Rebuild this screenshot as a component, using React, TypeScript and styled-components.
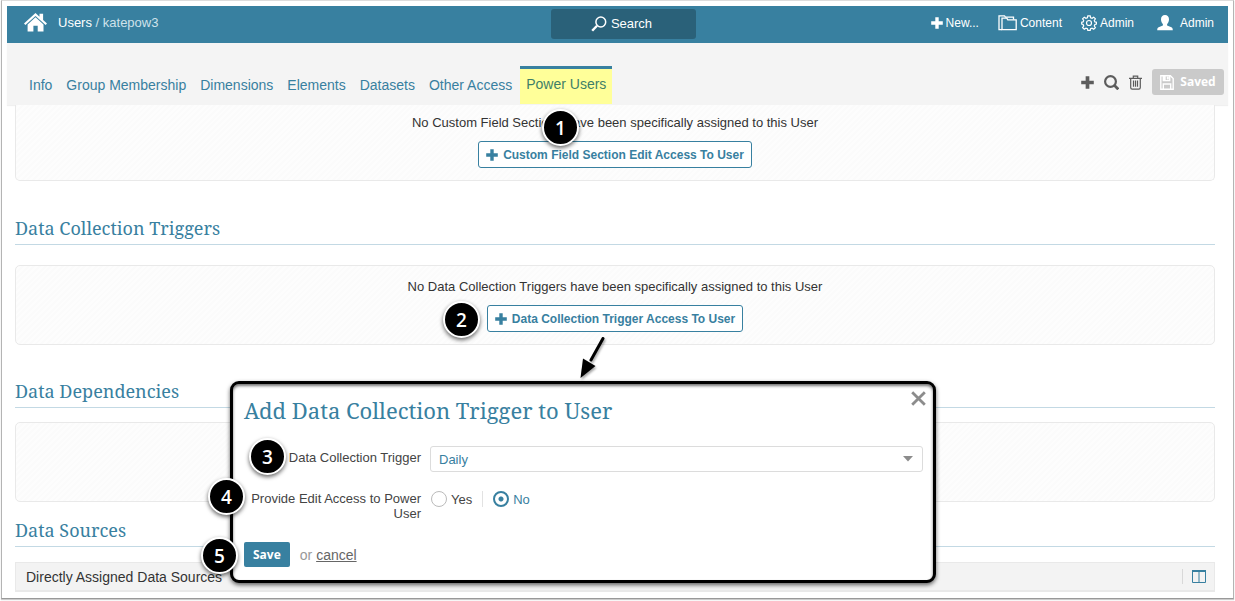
import React from "react";
import styled, { createGlobalStyle, css } from "styled-components";

const blue = "#3880a0";
const sans = '"Liberation Sans", Arial, sans-serif';
const serif = '"Noto Serif", "Droid Serif", "Liberation Serif", serif';

const GlobalStyle = createGlobalStyle`
  *, *::before, *::after { box-sizing: border-box; }
  body {
    margin: 0;
    background: #fff;
    color: #333;
    font: 13px/16px ${sans};
  }
  h1, h2, h3, p { margin: 0; font-weight: 400; }
  svg { display: block; flex: none; }
  button, select { font-family: inherit; cursor: pointer; }
`;

const Frame = styled.div`
  position: relative;
  margin: 0 1px 2px;
  padding: 5px 5px 6px;
  border: 1px solid #b4b4b4;
  border-top-color: #dcdcdc;
  border-bottom-color: #999;
  box-shadow: 0 1px 1px #ccc;
`;

const TopBar = styled.header`
  display: grid;
  grid-template-columns: 1fr 145px 1fr;
  align-items: center;
  height: 37px;
  padding: 0 5px 0 17px;
  background: ${blue};
  color: #fff;
`;

const Crumbs = styled.nav`
  display: flex;
  align-items: center;
  gap: 11px;
  padding-bottom: 4px;
  color: #cfe2eb;

  a { color: #fff; text-decoration: none; }
`;

const SearchButton = styled.button`
  display: flex;
  align-items: center;
  justify-content: center;
  gap: 4px;
  height: 30px;
  margin-bottom: 2px;
  padding: 0 4px 0 0;
  border: 0;
  border-radius: 3px;
  background: #2a6179;
  color: #fff;
  font-size: 13px;
`;

const Account = styled.nav`
  display: flex;
  justify-content: flex-end;
  gap: 19px;
  padding: 0 9px 4px 0;
  font-size: 12px;
`;

const AccountLink = styled.a`
  display: flex;
  align-items: center;
  gap: 3px;
  color: #fff;
  text-decoration: none;
`;

const SubHeader = styled.div`
  position: relative;
  display: flex;
  align-items: flex-end;
  justify-content: space-between;
  height: 62px;
  padding: 0 4px 0 16px;
  background: #f4f4f4;
  box-shadow: 0 1px 1px #f0f0f0;
`;

const Tabs = styled.nav`
  display: flex;
  gap: 2px;
  padding-bottom: 1px;
`;

const Tab = styled.a<{ $active?: boolean }>`
  height: 38px;
  padding: 8px 6px 0;
  border-top: 3px solid transparent;
  color: ${blue};
  font-size: 14px;
  text-decoration: none;
  white-space: nowrap;

  ${(p) =>
    p.$active &&
    css`
      padding-top: 7px;
      border-top-color: ${blue};
      background: #ffff99;
      color: #3f7f68;
    `}
`;

const Tools = styled.div`
  display: flex;
  align-items: center;
  gap: 10px;
  padding-bottom: 10px;
`;

const IconButton = styled.button`
  padding: 0;
  border: 0;
  background: none;
  color: #5c5c5c;
`;

const SavedButton = styled.button`
  display: flex;
  align-items: center;
  justify-content: center;
  gap: 6px;
  width: 72px;
  height: 26px;
  padding: 0;
  border: 0;
  border-radius: 3px;
  background: #cacaca;
  color: #fff;
  font: 700 12px/16px "Open Sans", sans-serif;
`;

const Content = styled.main`
  padding: 0 13px 0 8px;
`;

const Panel = styled.section<{ $cut?: boolean }>`
  position: relative;
  display: flex;
  flex-direction: column;
  align-items: center;
  gap: 10px;
  min-height: 80px;
  padding: 13px 12px 12px;
  border: 1px solid #e9e9e9;
  border-radius: 5px;
  background: repeating-linear-gradient(135deg, #fbfbfb 0 2px, #fdfdfd 2px 4px);

  ${(p) =>
    p.$cut &&
    css`
      min-height: 0;
      padding-top: 10px;
      border-top: 0;
      border-radius: 0 0 5px 5px;
    `}
`;

const AddButton = styled.button`
  display: flex;
  align-items: center;
  gap: 5px;
  height: 27px;
  padding: 0 7px;
  border: 1px solid ${blue};
  border-radius: 3px;
  background: #fff;
  color: ${blue};
  font-size: 12px;
  font-weight: 700;
`;

const SectionTitle = styled.h2<{ $above: number; $below: number }>`
  margin: ${(p) => p.$above}px 0 ${(p) => p.$below}px;
  padding-bottom: 4px;
  border-bottom: 1px solid #c3d9e4;
  color: ${blue};
  font: 18px/24px ${serif};
`;

const ListHeader = styled.div`
  display: flex;
  align-items: center;
  height: 30px;
  padding: 0 8px 0 10px;
  border: 1px solid #e9e9e9;
  border-bottom-width: 2px;
  background: #f3f3f3;

  h3 { flex: 1; font-size: 14px; line-height: 16px; }
`;

const ColumnsButton = styled.button`
  padding: 1px 0 1px 9px;
  border: 0;
  border-left: 1px solid #d8d8d8;
  background: none;
  color: ${blue};
`;

const Callout = styled.span`
  position: absolute;
  z-index: 3;
  display: flex;
  align-items: center;
  justify-content: center;
  width: 37px;
  height: 37px;
  border: 2px solid #fff;
  border-radius: 50%;
  background: #000;
  box-shadow: 0 2px 4px rgba(0, 0, 0, 0.6);
  color: #fff;
  font: 600 19px/24px "Open Sans", sans-serif;
`;

const Arrow = styled.svg`
  position: absolute;
  top: 69px;
  left: calc(50% - 40px);
  z-index: 2;
  filter: drop-shadow(1px 2px 1px rgba(0, 0, 0, 0.35));
`;

const Modal = styled.form`
  position: absolute;
  top: 380px;
  left: 228px;
  right: 297px;
  z-index: 2;
  padding: 11px 10px 13px 11px;
  border: 3px solid #000;
  border-radius: 9px;
  background: #fff;
  box-shadow: 0 2px 4px rgba(0, 0, 0, 0.6), inset 0 2px 3px rgba(0, 0, 0, 0.55);
  color: #444;
`;

const ModalTitle = styled.h1`
  margin-bottom: 21px;
  color: ${blue};
  font: 22px/30px ${serif};
`;

const CloseButton = styled(IconButton)`
  position: absolute;
  top: 7px;
  right: 7px;
  color: #8c8c8c;
`;

const Field = styled.div`
  display: grid;
  grid-template-columns: 177px 1fr;
  column-gap: 9px;
  line-height: 15px;
`;

const FieldLabel = styled.label`
  text-align: right;
`;

const SelectField = styled(Field)`
  margin-bottom: 19px;
  line-height: 24px;
`;

const SelectBox = styled.div`
  position: relative;

  select {
    display: block;
    width: 100%;
    height: 26px;
    padding: 0 24px 0 8px;
    border: 1px solid #dcdcdc;
    border-radius: 3px;
    appearance: none;
    background: #fff;
    color: ${blue};
    font-size: 13px;
  }

  svg {
    position: absolute;
    top: 10px;
    right: 10px;
    pointer-events: none;
  }
`;

const Choices = styled.div`
  display: flex;
  align-items: center;
  height: 16px;
  padding-left: 1px;
`;

const Choice = styled.label<{ $on?: boolean }>`
  display: flex;
  align-items: center;
  gap: 4px;
  color: ${(p) => (p.$on ? blue : "#444")};

  & + & {
    margin-left: 10px;
    padding-left: 10px;
    border-left: 1px solid #e2e2e2;
  }

  input {
    width: 16px;
    height: 16px;
    margin: 0;
    border: 1px solid #bbb;
    border-radius: 50%;
    appearance: none;
    background: #fff;
  }

  input:checked {
    border: 2px solid ${blue};
    background: radial-gradient(circle, ${blue} 0 2px, #fff 3px);
  }
`;

const Actions = styled.div`
  display: flex;
  align-items: center;
  gap: 10px;
  margin-top: 21px;
  color: #999;
  font-size: 14px;

  a { color: #666; }
`;

const SaveButton = styled.button`
  height: 25px;
  padding: 0 9px;
  border: 0;
  border-radius: 2px;
  background: ${blue};
  color: #fff;
  font: 700 12px/16px "Open Sans", sans-serif;
`;

const Plus = ({ size = 12 }: { size?: number }) => (
  <svg width={size} height={size} viewBox="0 0 12 12" fill="currentColor">
    <path d="M4.300.3h3.400v4h4.100v3.400H7.700v4H4.300v-4H.2V4.300h4.100z" />
  </svg>
);

const HomeIcon = () => (
  <svg width="23" height="19" viewBox="0 0 23 19" fill="#fff">
    <path d="M11.500 0 15.500 3.700V.8h3.600V7l3.900 3.600-1.400 1.300L11.500 2.900 1.400 11.900 0 10.600z" />
    <path d="M11.500 4.300 19.500 11.500V18.500h-5.800v-5.800H9.400v5.800H3.600v-7z" />
  </svg>
);

const Glass = () => (
  <svg width="16" height="16" viewBox="0 0 16 16" fill="none" stroke="#fff">
    <circle cx="9.800" cy="6" r="4.900" strokeWidth="1.500" />
    <path d="M6 9.700 1.200 14.800" strokeWidth="2.400" />
  </svg>
);

const FolderIcon = () => (
  <svg width="19" height="16" viewBox="0 0 19 16" fill="none" stroke="#fff" strokeWidth="1.300">
    <path d="M4 14.600H1V.9h5.500l1 1.300h8v2.200" />
    <path d="M4 14.600V3.200h4.800l1 1.700h8.400v9.700z" />
  </svg>
);

const GearIcon = () => (
  <svg width="16" height="16" viewBox="0 0 16 16" fill="none" stroke="#fff" strokeWidth="1.200">
    <path d="M6.800.8h2.400l.4 1.900 1.500.6 1.600-1.100 1.700 1.700-1.100 1.600.6 1.400 1.500.3v1.900l-1.500.4-.6 1.500 1.100 1.600-1.700 1.600-1.600-1-1.500.6-.4 1.500H6.800l-.4-1.500-1.500-.6-1.600 1-1.700-1.600 1.100-1.600-.6-1.500L.7 9.100V7.200l1.400-.3.6-1.400-1.100-1.600 1.700-1.700 1.600 1.100 1.500-.6z" />
    <circle cx="8" cy="8" r="2.500" />
  </svg>
);

const UserIcon = () => (
  <svg width="24" height="16" viewBox="0 0 24 16" fill="#fff">
    <path d="M12 0c2.500 0 4 1.700 4 4.300 0 2-.8 3.800-1.900 4.800v1.500l4.300 1.600c1 .5 1.400 1.200 1.400 3.100H4.200c0-1.900.4-2.600 1.400-3.100l4.300-1.600V9.100C8.800 8.100 8 6.300 8 4.300 8 1.700 9.500 0 12 0z" />
  </svg>
);

const FindIcon = () => (
  <svg width="15" height="15" viewBox="0 0 15 15" fill="none" stroke="currentColor">
    <circle cx="6.500" cy="6.500" r="5.400" strokeWidth="2.200" />
    <path d="m10.300 10.300 4 4" strokeWidth="2.800" />
  </svg>
);

const TrashIcon = () => (
  <svg width="13" height="15" viewBox="0 0 13 15" fill="none" stroke="currentColor" strokeWidth="1.200">
    <path d="M0 3.300h13M4.300 3V1.100h4.400V3M1.700 3.300v9.200c0 1 .6 1.600 1.500 1.600h6.600c.9 0 1.500-.6 1.500-1.600V3.300M4.500 5.500v6.300M6.500 5.500v6.300M8.500 5.500v6.300" />
  </svg>
);

const FloppyIcon = () => (
  <svg width="14" height="15" viewBox="0 0 14 15" fill="none" stroke="#fff" strokeWidth="1.400">
    <path d="M.8.800h9.600l2.800 2.800v10.600H.8z" />
    <path d="M3.300 1v4.600h6.400V1M3.300 14V9h7.400v5" />
    <path d="M7.800 1.500v3M4.700 1v4" strokeWidth="2" />
  </svg>
);

const ColumnsIcon = () => (
  <svg width="14" height="13" viewBox="0 0 14 13" fill="none" stroke="currentColor">
    <path d="M.5 1.500v11h13v-11M7 2v10.500" />
    <path d="M0 1h14" strokeWidth="2" />
  </svg>
);

const tabs = [
  "Info",
  "Group Membership",
  "Dimensions",
  "Elements",
  "Datasets",
  "Other Access",
  "Power Users",
];

export default function App() {
  const [edit, setEdit] = React.useState("No");

  return (
    <>
      <GlobalStyle />
      <Frame>
        <TopBar>
          <Crumbs aria-label="Breadcrumb">
            <a href="#home" aria-label="Home">
              <HomeIcon />
            </a>
            <span>
              <a href="#users">Users</a> / katepow3
            </span>
          </Crumbs>
          <SearchButton type="button">
            <Glass />
            Search
          </SearchButton>
          <Account>
            <AccountLink href="#new">
              <Plus />
              New...
            </AccountLink>
            <AccountLink href="#content">
              <FolderIcon />
              Content
            </AccountLink>
            <AccountLink href="#admin">
              <GearIcon />
              Admin
            </AccountLink>
            <AccountLink href="#profile">
              <UserIcon />
              Admin
            </AccountLink>
          </Account>
        </TopBar>

        <SubHeader>
          <Tabs>
            {tabs.map((name) => (
              <Tab key={name} href="#tab" $active={name === "Power Users"}>
                {name}
              </Tab>
            ))}
          </Tabs>
          <Tools>
            <IconButton type="button" aria-label="Add">
              <Plus size={13} />
            </IconButton>
            <IconButton type="button" aria-label="Find">
              <FindIcon />
            </IconButton>
            <IconButton type="button" aria-label="Delete">
              <TrashIcon />
            </IconButton>
            <SavedButton type="button">
              <FloppyIcon />
              Saved
            </SavedButton>
          </Tools>
        </SubHeader>

        <Content>
          <Panel $cut>
            <p>No Custom Field Sections have been specifically assigned to this User</p>
            <AddButton type="button">
              <Plus />
              Custom Field Section Edit Access To User
            </AddButton>
            <Callout style={{ top: 4, left: "calc(50% - 73px)" }}>1</Callout>
          </Panel>

          <SectionTitle $above={35} $below={20}>Data Collection Triggers</SectionTitle>
          <Panel>
            <p>No Data Collection Triggers have been specifically assigned to this User</p>
            <AddButton type="button">
              <Plus />
              Data Collection Trigger Access To User
            </AddButton>
            <Callout style={{ top: 35, left: "calc(50% - 172px)" }}>2</Callout>
            <Arrow width="36" height="48" viewBox="0 0 36 48">
              <path d="M28 3.500 16 25" stroke="#000" strokeWidth="3" strokeLinecap="round" />
              <path d="M5.500 43 8 23.500 20.500 31z" />
            </Arrow>
          </Panel>

          <SectionTitle $above={34} $below={14}>Data Dependencies</SectionTitle>
          <Panel />

          <SectionTitle $above={16} $below={15}>Data Sources</SectionTitle>
          <ListHeader>
            <h3>Directly Assigned Data Sources</h3>
            <ColumnsButton type="button" aria-label="Columns">
              <ColumnsIcon />
            </ColumnsButton>
          </ListHeader>
        </Content>

        <Modal onSubmit={(e) => e.preventDefault()}>
          <ModalTitle>Add Data Collection Trigger to User</ModalTitle>
          <CloseButton type="button" aria-label="Close">
            <svg width="15" height="15" viewBox="0 0 15 15" stroke="currentColor" strokeWidth="2.800">
              <path d="m1.200 1.200 12.600 12.600M13.800 1.200 1.200 13.800" />
            </svg>
          </CloseButton>
          <SelectField>
            <FieldLabel htmlFor="trigger">Data Collection Trigger</FieldLabel>
            <SelectBox>
              <select id="trigger" defaultValue="Daily">
                <option>Daily</option>
              </select>
              <svg width="10" height="6" viewBox="0 0 10 6" fill="#8c8c8c">
                <path d="M0 0h10L5 5.500z" />
              </svg>
            </SelectBox>
          </SelectField>
          <Field role="radiogroup" aria-labelledby="edit-label">
            <FieldLabel as="span" id="edit-label">Provide Edit Access to Power User</FieldLabel>
            <Choices>
              {["Yes", "No"].map((name) => (
                <Choice key={name} $on={edit === name}>
                  <input
                    type="radio"
                    name="edit"
                    checked={edit === name}
                    onChange={() => setEdit(name)}
                  />
                  {name}
                </Choice>
              ))}
            </Choices>
          </Field>
          <Actions>
            <SaveButton type="submit">Save</SaveButton>
            <span>
              or <a href="#cancel">cancel</a>
            </span>
          </Actions>
          <Callout style={{ top: 54, left: 16 }}>3</Callout>
          <Callout style={{ top: 94, left: -25 }}>4</Callout>
          <Callout style={{ top: 153, left: -32 }}>5</Callout>
        </Modal>
      </Frame>
    </>
  );
}
